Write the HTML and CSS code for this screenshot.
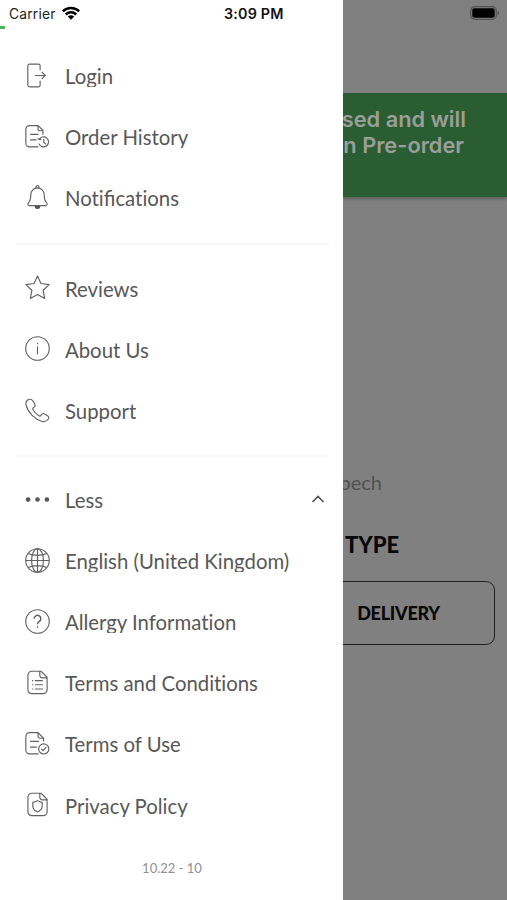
FILE: index.html
```
<!DOCTYPE html>
<html lang="en">
<head>
<meta charset="utf-8">
<title>Menu</title>
<link rel="stylesheet" href="styles.css">
</head>
<body>
<div class="screen">
  <nav class="drawer">
    <header class="status">
      <span class="carrier">Carrier</span>
      <svg class="wifi" viewBox="0 0 18 14" width="18" height="14"><g fill="none" stroke="#000" stroke-width="2.5"><path d="M.8 5.4a11.6 11.6 0 0 1 16.4 0"/><path d="M3.8 8.5a7.4 7.4 0 0 1 10.4 0"/></g><path d="M9 13.8 5.8 10.6a4.5 4.5 0 0 1 6.4 0z"/></svg>
      <span class="clock">3:09 PM</span>
    </header>
    <div class="progress"></div>
    <ul class="group">
      <li class="item"><svg class="icon" viewBox="0 0 24 24"><path d="M14.500 7V2.600A1.500 1.500 0 0 0 13 1.100H4.400A1.700 1.700 0 0 0 2.700 2.800v18.400a1.700 1.700 0 0 0 1.700 1.700H13a1.500 1.500 0 0 0 1.500-1.500V17M9.500 12h10M16 8.500l3.500 3.500-3.500 3.500"/></svg><span class="label">Login</span></li>
      <li class="item"><svg class="icon" viewBox="0 0 24 24"><path d="M13 22H4.500A3.700 3.700 0 0 1 .8 18.300V5.200a3.700 3.700 0 0 1 3.700-3.700h8L17.200 6v4.200M12.500 1.500v3a2 2 0 0 0 2 2h2.700M5 10h8M5 15.200h6M13.500 15a4.800 4.800 0 1 1-.2 3.800M13.500 15l-1.500-1.200M13.500 15l2.200-.3M18 14.500v3l2.200 2"/></svg><span class="label">Order History</span></li>
      <li class="item"><svg class="icon" viewBox="0 0 24 24"><path d="M10.500 2.700V2a1.500 1.500 0 0 1 3 0v.7M12 2.700a6.500 6.500 0 0 0-6.400 6.500c0 4.800-.6 6.200-2.400 8-.8.9-.5 2.600.9 2.600h15.800c1.400 0 1.700-1.700.9-2.600-1.800-1.800-2.400-3.200-2.400-8A6.500 6.500 0 0 0 12 2.700z"/><path class="solid" d="M9.800 20.800h4.400c-.3 2.400-4.100 2.400-4.400 0z"/></svg><span class="label">Noti<span class="joined">fi</span>cations</span></li>
    </ul>
    <hr class="rule">
    <ul class="group">
      <li class="item"><svg class="icon" viewBox="0 0 24 24"><path stroke-linejoin="round" d="M12 1l3.300 7.200 7.900 1-5.800 5.400 1.500 8-6.900-3.800-6.900 3.800 1.500-8L.8 9.200l7.900-1z"/></svg><span class="label">Reviews</span></li>
      <li class="item"><svg class="icon" viewBox="0 0 24 24"><circle cx="12" cy="12" r="11.300"/><path d="M12 10v7.500M12 6.500v1.500"/></svg><span class="label">About Us</span></li>
      <li class="item"><svg class="icon" viewBox="0 0 24 24"><path stroke-linejoin="round" d="M3.300 1.500C1.300 2.600.5 4.400 1 6.700c2 7.700 8.200 13.800 15.700 15.800 2.500.6 4.500-.4 5.700-2.300.7-1.100.6-2.100-.4-2.900l-3.100-2c-1-.7-2-.5-2.800.4l-.8 1c-.5.7-1.200.8-2 .3a18 18 0 0 1-5.600-5.700c-.5-.8-.4-1.500.3-2l1-.8c.9-.8 1-1.700.4-2.700l-2-3.200c-.8-1.300-1.800-1.900-4.100-1.100z"/></svg><span class="label">Support</span></li>
    </ul>
    <hr class="rule">
    <ul class="group">
      <li class="item"><svg class="icon" viewBox="0 0 24 24"><g class="solid"><circle cx="3" cy="12" r="1.700"/><circle cx="12" cy="12" r="1.700"/><circle cx="21" cy="12" r="1.700"/></g></svg><span class="label">Less</span><svg class="chevron" viewBox="0 0 14 8" width="14" height="8"><path d="M1.500 7 7 1.500 12.500 7"/></svg></li>
      <li class="item"><svg class="icon" viewBox="0 0 24 24"><circle cx="12" cy="12" r="11.300"/><ellipse cx="12" cy="12" rx="5.700" ry="11.300"/><path d="M12 .7v22.600M.7 12h22.600M3 5.300c5 2.400 13 2.400 18 0M3 18.700c5-2.400 13-2.400 18 0"/></svg><span class="label">English (United Kingdom)</span></li>
      <li class="item"><svg class="icon" viewBox="0 0 24 24"><circle cx="12" cy="12" r="11.300"/><path stroke-width="1.400" d="M8.800 9.300a3.200 3.200 0 1 1 5 2.600c-1.200.8-1.800 1.300-1.800 2.800M12 16.500v1.500"/></svg><span class="label">Allergy Information</span></li>
      <li class="item"><svg class="icon" viewBox="0 0 24 24"><path d="M6.500 1.200h9L21.200 7v12a3.700 3.700 0 0 1-3.700 3.700h-11A3.700 3.700 0 0 1 2.800 19V4.900a3.700 3.700 0 0 1 3.700-3.700zM14.200 1.200v3.600A2.700 2.700 0 0 0 16.900 7.500h4.300M9.500 10.200h7.700M9.500 14.200h7.700M9.500 18.200h7.700M6.800 10.200h1.200M6.800 14.200h1.200M6.800 18.200h1.200"/></svg><span class="label">Terms and Conditions</span></li>
      <li class="item"><svg class="icon" viewBox="0 0 24 24"><path d="M13 22H4.500A3.700 3.700 0 0 1 .8 18.300V5.200a3.700 3.700 0 0 1 3.700-3.700h8L17.800 7v3M12.500 1.500v3.400a2.100 2.100 0 0 0 2.100 2.100h3.200M4.800 10h8.500M4.800 15.500h6.500"/><circle cx="18" cy="17.200" r="4.900"/><path d="M15.700 17.200l1.600 1.700 3.100-3.500"/></svg><span class="label">Terms of Use</span></li>
      <li class="item"><svg class="icon" viewBox="0 0 24 24"><path d="M6.500 1.200h9L21.200 7v12a3.700 3.700 0 0 1-3.700 3.700h-11A3.700 3.700 0 0 1 2.800 19V4.900a3.700 3.700 0 0 1 3.700-3.700zM14.200 1.200v3.600A2.700 2.700 0 0 0 16.900 7.500h4.300M12 8.300c-1.500 1-3 1.500-4.500 1.700v3.500c0 2.500 1.700 4.500 4.500 5.700 2.800-1.200 4.500-3.200 4.500-5.700V10c-1.500-.2-3-.7-4.500-1.700z"/></svg><span class="label">Privacy Policy</span></li>
    </ul>
    <footer class="version">10.22 - 10</footer>
  </nav>
  <main class="page">
    <div class="battery-row"><svg width="30" height="14" viewBox="0 0 30 14"><rect x=".7" y=".7" width="25.600" height="12.600" rx="3.800" fill="none" stroke="#525252" stroke-width="1.200"/><rect x="2.300" y="2.300" width="22.400" height="9.400" rx="2"/><path d="M27.700 4.800c2 .8 2 3.600 0 4.400z" fill="#525252"/></svg></div>
    <div class="notice"><div>osed and will</div><div class="second">in Pre-order</div></div>
    <div class="place">bech</div>
    <h2 class="heading">TYPE</h2>
    <button class="delivery">DELIVERY</button>
  </main>
</div>
</body>
</html>
```

FILE: styles.css
```
* { box-sizing: border-box; }
body { margin: 0; font-family: Lato, sans-serif; }
.screen { display: flex; width: 507px; height: 900px; overflow: hidden; background: #808080; }
.drawer { flex: 0 0 343px; height: 900px; background: #fff; color: #585858; }
.status { display: flex; align-items: center; height: 26px; padding: 1px 0 0 9px; font-family: Inter, sans-serif; font-size: 13.800px; color: #222; }
.carrier { width: 47px; letter-spacing: .2px; }
.wifi { margin: -2px 0 0 6px; }
.clock { margin-left: 144px; font-size: 14.300px; font-weight: 600; letter-spacing: .2px; color: #111; white-space: nowrap; }
.progress { width: 5px; height: 3px; background: #4fb45b; }
.group { margin: 0; padding: 0; list-style: none; }
.progress + .group { margin-top: 17px; }
.item { display: flex; align-items: center; height: 61.100px; padding: 0 18px 0 25px; }
.icon { flex: none; width: 25px; height: 25px; margin-top: -3px; fill: none; stroke: #626262; stroke-width: 1.100; overflow: visible; }
.icon .solid { fill: #555; stroke: #555; }
.label { height: 24px; margin: -3px 0 0 15px; overflow: hidden; font-size: 20.350px; line-height: 27px; white-space: nowrap; font-variant-ligatures: none; }
.joined { font-variant-ligatures: normal; }
.chevron { margin: -3px 0 0 auto; fill: none; stroke: #505050; stroke-width: 1.600; }
.rule { height: 2px; margin: 14px 14px 13.500px 16px; border: 0; background: #f5f5f5; }
.rule ~ .group ~ .rule { margin: 12.500px 14px 13.500px 16px; }
.version { margin: 22.500px 0 0 1px; text-align: center; font-size: 13px; line-height: 18px; color: #909090; }
.page { flex: 1; min-width: 0; height: 900px; overflow: hidden; }
.battery-row { display: flex; justify-content: flex-end; height: 93px; padding: 6px 7px 0 0; }
.notice { display: flex; flex-direction: column; align-items: flex-end; height: 104px; padding: 13px 41px 0 0; background: #2a5d32; box-shadow: 0 2px 3px #0004; color: #9a9f9a; font: 600 21.800px/26px Inter, sans-serif; white-space: nowrap; }
.second { margin-right: 2px; }
.place { display: flex; justify-content: flex-end; margin: 271px 125px 0 -20px; font-size: 20px; line-height: 28px; color: #505050; }
.heading { margin: 35px 0 0 2px; font-size: 22px; line-height: 28px; font-weight: 900; color: #080808; }
.delivery { display: block; width: 172px; height: 64px; margin: 22px 0 0 -20px; padding: 0 21px 0 0; border: 1.500px solid #202020; border-radius: 9px; background: none; color: #080808; font: 900 18px Lato, sans-serif; letter-spacing: -.25px; }
```
